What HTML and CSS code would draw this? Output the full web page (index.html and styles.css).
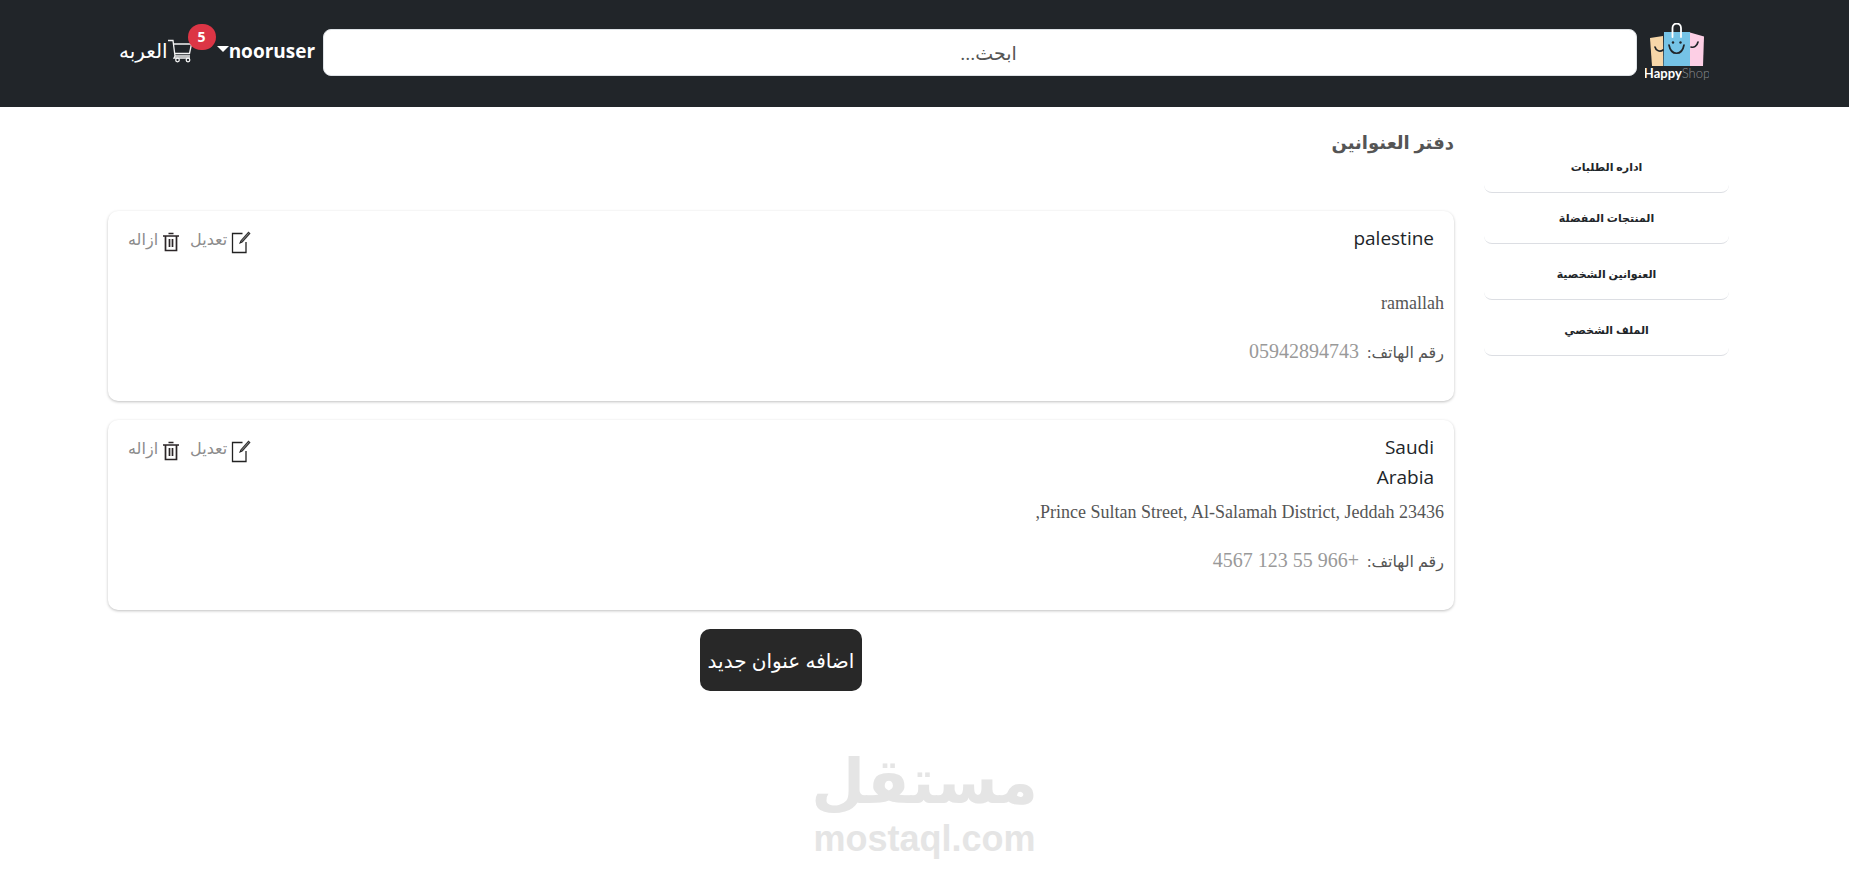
FILE: index.html
```html
<!DOCTYPE html>
<html lang="ar" dir="rtl">
<head>
<meta charset="utf-8">
<meta name="viewport" content="width=device-width, initial-scale=1">
<title>دفتر العنوانين</title>
<link rel="stylesheet" href="styles.css">
</head>
<body>
<svg class="sprite" aria-hidden="true">
  <symbol id="edit" viewBox="0 0 20 24">
    <path d="M11.500 3.500H1.500v19h13.500V12" fill="none" stroke="#222" stroke-width="1.300"/>
    <path d="M18.500 2.500 10.500 11.500" fill="none" stroke="#333" stroke-width="2.800"/>
    <path d="M17.700 3.300 11 10.800" fill="none" stroke="#aaa" stroke-width=".7"/>
    <path d="M9.500 10.500 8 14 11.500 12.500z" fill="#222"/>
  </symbol>
  <symbol id="trash" viewBox="0 0 18 20">
    <path d="M1 4h16M6.500 1.500h5M3.500 4v14.500h11V4M7.500 7v8M10.500 7v8" fill="none" stroke="#2b2527" stroke-width="1.700"/>
  </symbol>
</svg>

<header class="header">
  <a class="logo" href="#" aria-label="HappyShop">
    <svg viewBox="0 0 64 59" width="64" height="59">
      <path d="M5 15l13-2v30H7z" fill="#f6d6a8"/>
      <path d="M45 9.500l14 4-1 29.500H45z" fill="#fdcfe5"/>
      <path d="M19 9h26v34H18.500z" fill="#75c3e6"/>
      <path d="M10 24c1 4 5 5 8 3M46 24c3 1 6-1 7-5" fill="none" stroke="#212529" stroke-width="1.700" stroke-linecap="round"/>
      <path d="M24 22c2 11 13 11 15 0" fill="none" stroke="#212529" stroke-width="1.700" stroke-linecap="round"/>
      <circle cx="28" cy="19.500" r="1.200" fill="#212529"/><circle cx="35.500" cy="19.500" r="1.200" fill="#212529"/>
      <path d="M27.500 14V5c0-6 8.500-6 8.500 0v9" fill="none" stroke="#fff" stroke-width="1.800" stroke-linecap="round"/>
      <text class="logo-text" x="32" y="55" text-anchor="middle"><tspan fill="#fff">Happy</tspan><tspan class="logo-thin">Shop</tspan></text>
    </svg>
  </a>
  <input class="search" type="search" placeholder="ابحث..." aria-label="ابحث">
  <nav class="tools">
    <button class="user" type="button">nooruser<span class="caret"></span></button>
    <a class="cart" href="#" aria-label="السلة">
      <svg viewBox="0 0 25 24" width="25" height="24" fill="none" stroke="#f4f4f4" stroke-width="1.300">
        <path d="M0 1.500h5l2 15.500h15M5.500 5h18l-2 9.500H7M7 17l-1 2h16"/>
        <circle cx="9.500" cy="21" r="1.800"/><circle cx="20" cy="21" r="1.800"/>
      </svg>
      <span class="badge">5</span>
    </a>
    <a class="lang" href="#">العربه</a>
  </nav>
</header>

<div class="page">
  <nav class="side">
    <a class="side-link" href="#">اداره الطلبات</a>
    <a class="side-link" href="#">المنتجات المفضلة</a>
    <a class="side-link tall" href="#">العنوانين الشخصية</a>
    <a class="side-link tall" href="#">الملف الشخصي</a>
  </nav>
  <main class="main">
    <h1 class="title">دفتر العنوانين</h1>
    <article class="card">
      <div class="card-top">
        <h2 class="country">palestine</h2>
        <div class="actions">
          <button class="action" type="button"><svg class="edit"><use href="#edit"/></svg><span class="action-text">تعديل</span></button>
          <button class="action" type="button"><svg class="trash"><use href="#trash"/></svg><span class="action-text">ازاله</span></button>
        </div>
      </div>
      <p class="street">ramallah</p>
      <p class="phone">رقم الهاتف: <span class="number">05942894743</span></p>
    </article>
    <article class="card">
      <div class="card-top">
        <h2 class="country">Saudi Arabia</h2>
        <div class="actions">
          <button class="action" type="button"><svg class="edit"><use href="#edit"/></svg><span class="action-text">تعديل</span></button>
          <button class="action" type="button"><svg class="trash"><use href="#trash"/></svg><span class="action-text">ازاله</span></button>
        </div>
      </div>
      <p class="street">Prince Sultan Street, Al-Salamah District, Jeddah 23436,</p>
      <p class="phone">رقم الهاتف: <span class="number">+966 55 123 4567</span></p>
    </article>
    <button class="add" type="button">اضافه عنوان جديد</button>
  </main>
</div>

<footer class="brand">
  <span class="brand-ar">مستقل</span>
  <span class="brand-en" dir="ltr">mostaql.com</span>
</footer>
</body>
</html>
```
FILE: styles.css
```css
* { box-sizing: border-box; }
body {
  margin: 0;
  background: #fff;
  color: #212529;
  font-family: "Open Sans", "DejaVu Sans", sans-serif;
  font-size: 19px;
}
a { color: inherit; text-decoration: none; }
button { border: 0; background: none; padding: 0; font: inherit; color: inherit; cursor: pointer; }
h1, h2, p { margin: 0; }
.sprite { position: absolute; width: 0; height: 0; }

.header {
  display: flex;
  align-items: center;
  gap: 8px;
  padding: 23px 140px 25px 119px;
  background: #212529;
  color: #fff;
}
.logo, .logo svg { display: block; }
.logo-text { font: 700 13px Lato, sans-serif; direction: ltr; }
.logo-thin { font-weight: 300; fill: #8a8d90; }
.search {
  flex: 1;
  min-width: 0;
  height: 47px;
  border: 1px solid #dee2e6;
  border-radius: 8px;
  background: #fff;
  text-align: center;
  font: 19px "Open Sans", "DejaVu Sans", sans-serif;
}
.search::placeholder { color: #555; opacity: 1; }
.tools { display: flex; align-items: center; padding-bottom: 4px; }
.user { display: flex; align-items: center; font-weight: 700; line-height: 28px; }
.caret {
  border: 6px solid transparent;
  border-top-color: #fff;
  border-bottom: 0;
  margin-bottom: 4px;
}
.cart { position: relative; margin-right: 24px; }
.cart svg { display: block; }
.badge {
  position: absolute;
  left: 20px;
  top: -15px;
  width: 28px;
  height: 26px;
  border-radius: 14px;
  background: #dc3545;
  font-size: 14px;
  font-weight: 700;
  line-height: 26px;
  text-align: center;
}
.lang { font-size: 20px; line-height: 28px; }

.page { display: flex; gap: 30px; padding: 0 120px 0 108px; }
.side { flex: 0 0 245px; padding-top: 35px; }
.side-link {
  display: block;
  height: 51px;
  padding-top: 13px;
  border-bottom: 1px solid #dcdee3;
  border-radius: 8px;
  text-align: center;
  font-size: 11px;
  font-weight: 700;
  line-height: 24px;
}
.side-link.tall { height: 56px; padding-top: 18px; }
.main { flex: 1; min-width: 0; display: flex; flex-direction: column; }
.title {
  height: 104px;
  padding-top: 17px;
  color: #555;
  font-size: 18px;
  line-height: 36px;
}
.card {
  min-height: 190px;
  margin-bottom: 19px;
  padding: 12px 10px;
  border-radius: 10px;
  box-shadow: 0 1px 3px rgba(0, 0, 0, .25);
}
.card-top { display: flex; justify-content: space-between; min-height: 60px; padding: 0 10px; }
.country { max-width: 96px; font-size: 19px; font-weight: 400; line-height: 30px; }
.actions { display: flex; align-items: flex-start; gap: 10px; }
.action { display: flex; align-items: center; gap: 4px; height: 38px; color: #8c8c8c; font-size: 16px; }
.action-text { padding-bottom: 6px; }
.edit { width: 20px; height: 24px; }
.trash { width: 18px; height: 20px; }
.street {
  padding-top: 6px;
  color: #555;
  font: 18px/28px "Liberation Serif", "DejaVu Sans", serif;
}
.phone {
  padding-top: 18px;
  color: #555;
  font: 16px/32px "Liberation Serif", "DejaVu Sans", serif;
}
.number { margin-right: 4px; color: #999; font-size: 20px; }
.add {
  align-self: center;
  height: 62px;
  padding: 0 8px;
  border-radius: 10px;
  background: #282828;
  color: #fff;
  font-size: 20px;
}
.brand {
  display: flex;
  flex-direction: column;
  align-items: center;
  padding-top: 54px;
  color: #e5e5e5;
  font-weight: 700;
}
.brand-ar { font-family: "DejaVu Sans", sans-serif; font-size: 62px; line-height: 74px; }
.brand-en { font-family: "Liberation Sans", sans-serif; font-size: 36px; line-height: 40px; }
```
